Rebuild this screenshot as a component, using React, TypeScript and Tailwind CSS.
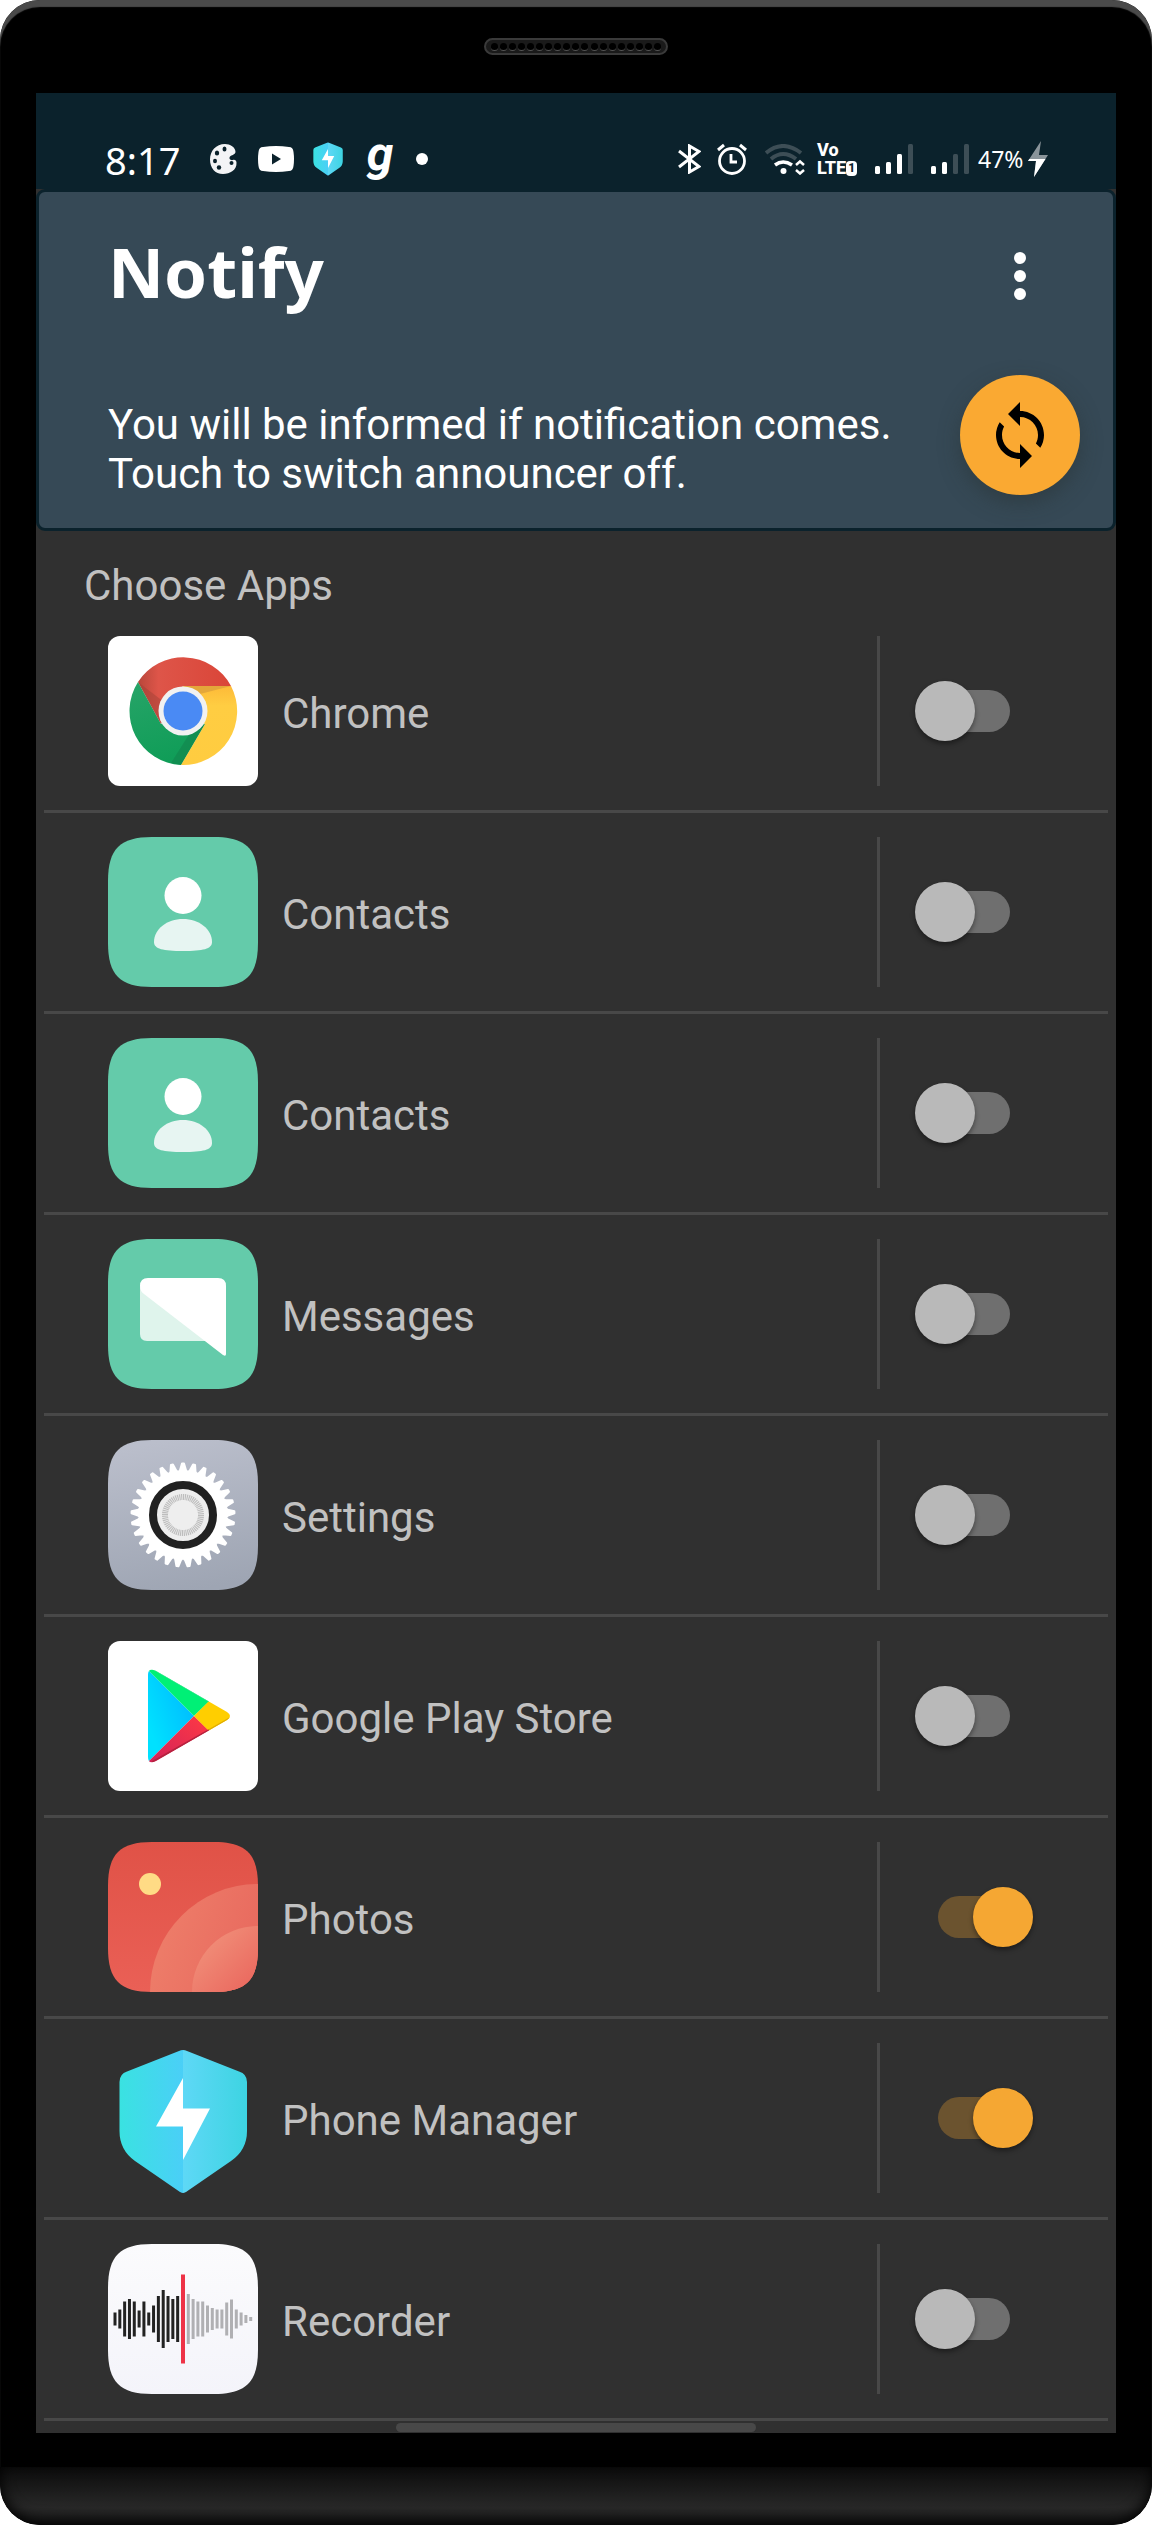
import { useState, type ReactNode } from "react";
import { MdSync } from "react-icons/md";

const SQUIRCLE =
  "M0 44C0 12 12 0 44 0H106C138 0 150 12 150 44V106C150 138 138 150 106 150H44C12 150 0 138 0 106Z";

const GEAR_TEETH = 29;
const gearPoints = Array.from({ length: GEAR_TEETH })
  .flatMap((_, i) => {
    const step = (2 * Math.PI) / GEAR_TEETH;
    const mid = i * step - Math.PI / 2;
    return [
      [43, -0.5],
      [45, -0.3],
      [51.5, -0.09],
      [51.5, 0.09],
      [45, 0.3],
    ].map(([r, o]) => {
      const a = mid + o * step;
      return `${(75 + r * Math.cos(a)).toFixed(2)},${(75 + r * Math.sin(a)).toFixed(2)}`;
    });
  })
  .join(" ");

const DARK_BARS = [13, 19, 35, 40, 35, 17, 35, 13, 27, 46, 58, 46, 40, 46];
const LIGHT_BARS = [50, 40, 35, 35, 27, 22, 19, 19, 33, 39, 19, 13, 8, 4];

function IconFrame({ children }: { children: ReactNode }) {
  return (
    <svg viewBox="0 0 150 150" className="size-[150px] shrink-0" aria-hidden="true">
      {children}
    </svg>
  );
}

function ChromeIcon() {
  return (
    <IconFrame>
      <defs>
        <linearGradient id="chRed" x1="0" x2="1">
          <stop offset="0" stopColor="#b8473b" />
          <stop offset="0.22" stopColor="#de5549" />
          <stop offset="1" stopColor="#da4538" />
        </linearGradient>
        <linearGradient id="chGreen" x1="0" y1="0" x2="0.3" y2="1">
          <stop offset="0" stopColor="#27a468" />
          <stop offset="1" stopColor="#109d58" />
        </linearGradient>
        <linearGradient id="chYellow" x1="0" y1="0" x2="0" y2="1">
          <stop offset="0" stopColor="#fdba38" />
          <stop offset="0.25" stopColor="#ffcd42" />
          <stop offset="1" stopColor="#ffcc40" />
        </linearGradient>
      </defs>
      <rect width="150" height="150" rx="12" fill="#fff" />
      <path d="M30 46A54 54 0 0 1 123 50H75L53 88Z" fill="url(#chRed)" />
      <path d="M30 46A54 54 0 0 0 73 129L97 88L75 75L53 88Z" fill="url(#chGreen)" />
      <path d="M123 50A54 54 0 0 1 73 129L97 88L75 75V50Z" fill="url(#chYellow)" />
      <path d="M75 50H123L92 58Z" fill="#d99c3a" opacity="0.7" />
      <path d="M97 88L73 129L63 127L82 97Z" fill="#12834c" opacity="0.6" />
      <path d="M30 46L53 88L56 66Z" fill="#9e4035" opacity="0.45" />
      <circle cx="75" cy="75" r="24.5" fill="#f1f1f1" />
      <circle cx="75" cy="75" r="19.5" fill="#4a8af4" />
    </IconFrame>
  );
}

function ContactsIcon() {
  return (
    <IconFrame>
      <path d={SQUIRCLE} fill="#64cbaa" />
      <circle cx="75" cy="58.5" r="18.5" fill="#fff" />
      <path
        d="M46 105C46 92 59 82 75 82S104 92 104 105C104 112 95 114 75 114S46 112 46 105Z"
        fill="#e7f5f2"
      />
    </IconFrame>
  );
}

function MessagesIcon() {
  return (
    <IconFrame>
      <path d={SQUIRCLE} fill="#64cbaa" />
      <path d="M32 48V95Q32 102 39 102H98L60 60Z" fill="#dff4ec" />
      <path
        d="M32 47Q32 39 40 39H110Q118 39 118 47V115Q118 118 115 116L36 55Q32 52 32 47Z"
        fill="#fff"
      />
    </IconFrame>
  );
}

function SettingsIcon() {
  return (
    <IconFrame>
      <defs>
        <linearGradient id="setBg" x1="0.4" y1="0" x2="0.6" y2="1">
          <stop offset="0" stopColor="#babecb" />
          <stop offset="1" stopColor="#9ea5b3" />
        </linearGradient>
      </defs>
      <path d={SQUIRCLE} fill="url(#setBg)" />
      <polygon points={gearPoints} fill="#fff" stroke="#fff" strokeWidth="2" strokeLinejoin="round" />
      <circle cx="75" cy="75" r="30" fill="#eee" stroke="#212121" strokeWidth="8" />
      <circle
        cx="75"
        cy="75"
        r="18"
        fill="none"
        stroke="#bdbdbd"
        strokeWidth="6"
        pathLength="120"
        strokeDasharray="1.2 0.8"
      />
    </IconFrame>
  );
}

function PlayStoreIcon() {
  return (
    <IconFrame>
      <defs>
        <clipPath id="playClip">
          <path d="M40 34Q40 26 48 30L119 71Q125 75 119 79L48 120Q40 124 40 116Z" />
        </clipPath>
        <linearGradient id="playBlue" x1="1" y1="0.2" x2="0.2" y2="0.8">
          <stop offset="0" stopColor="#00b8ff" />
          <stop offset="1" stopColor="#00e1ff" />
        </linearGradient>
        <linearGradient id="playRed" x1="1" y1="0" x2="0" y2="1">
          <stop offset="0" stopColor="#ff3a44" />
          <stop offset="1" stopColor="#d0205a" />
        </linearGradient>
      </defs>
      <rect width="150" height="150" rx="12" fill="#fff" />
      <g clipPath="url(#playClip)">
        <path d="M38 27L86 75L38 123Z" fill="url(#playBlue)" />
        <path d="M40 24V29L86 75L101 60.5V55Z" fill="#00f076" />
        <path d="M40 126V121L86 75L101 89.5V95Z" fill="url(#playRed)" />
        <path d="M86 75L101 60L106 50L130 75L106 100L101 90Z" fill="#ffce00" />
        <path d="M44 121L101 89" stroke="#b4233f" strokeWidth="2" />
        <path d="M101 89L122 77" stroke="#e0ac00" strokeWidth="2" />
        <path d="M44 27L101 60" stroke="#3fe08a" strokeWidth="2" />
      </g>
    </IconFrame>
  );
}

function PhotosIcon() {
  return (
    <IconFrame>
      <defs>
        <linearGradient id="phBg" x1="0" y1="0" x2="0" y2="1">
          <stop offset="0" stopColor="#e05247" />
          <stop offset="1" stopColor="#ea6056" />
        </linearGradient>
        <linearGradient id="phBig" gradientUnits="userSpaceOnUse" x1="60" y1="90" x2="150" y2="120">
          <stop offset="0" stopColor="#ed7b68" />
          <stop offset="1" stopColor="#e8695e" />
        </linearGradient>
        <linearGradient id="phSmall" gradientUnits="userSpaceOnUse" x1="100" y1="100" x2="145" y2="145">
          <stop offset="0" stopColor="#f08c77" />
          <stop offset="1" stopColor="#ea685e" />
        </linearGradient>
        <clipPath id="phClip">
          <path d={SQUIRCLE} />
        </clipPath>
      </defs>
      <g clipPath="url(#phClip)">
        <rect width="150" height="150" fill="url(#phBg)" />
        <circle cx="150" cy="150" r="108" fill="url(#phBig)" />
        <circle cx="150" cy="150" r="66" fill="url(#phSmall)" />
        <circle cx="42" cy="42" r="11" fill="#ffdb85" />
      </g>
    </IconFrame>
  );
}

function ShieldArt({ id }: { id: string }) {
  return (
    <>
      <defs>
        <linearGradient id={`${id}L`} x1="0" x2="1">
          <stop offset="0" stopColor="#3ae2e1" />
          <stop offset="1" stopColor="#4acff7" />
        </linearGradient>
        <linearGradient id={`${id}R`} x1="0" x2="1">
          <stop offset="0" stopColor="#5ed8f6" />
          <stop offset="1" stopColor="#3dd4e2" />
        </linearGradient>
      </defs>
      <path
        d="M75 7Q73 7 71 8L19 28.500Q11.500 31 11.500 39V88Q11.500 107 27 118L72 149Q74 150 75 150Z"
        fill={`url(#${id}L)`}
      />
      <path
        d="M75 7Q77 7 79 8L131 28.500Q139 31 139 39V88Q139 107 123 118L78 149Q76 150 75 150Z"
        fill={`url(#${id}R)`}
      />
      <path d="M75 35V65.500H102L75 117V83.500H48Z" fill="#fff" />
    </>
  );
}

function PhoneManagerIcon() {
  return (
    <IconFrame>
      <ShieldArt id="pm" />
    </IconFrame>
  );
}

function RecorderIcon() {
  return (
    <IconFrame>
      <defs>
        <linearGradient id="recBg" x1="0" y1="0" x2="0" y2="1">
          <stop offset="0" stopColor="#fbfbfd" />
          <stop offset="1" stopColor="#f4f4fa" />
        </linearGradient>
      </defs>
      <path d={SQUIRCLE} fill="url(#recBg)" />
      {DARK_BARS.map((h, i) => (
        <rect key={i} x={5.5 + i * 4.82} y={75 - h / 2} width="3" height={h} fill="#222" />
      ))}
      {LIGHT_BARS.map((h, i) => (
        <rect key={i} x={78.8 + i * 4.8} y={75 - h / 2} width="3" height={h} fill="#b0b0b3" />
      ))}
      <rect x="73" y="30.500" width="4" height="89" fill="#ee3347" />
    </IconFrame>
  );
}

function SignalIcon({ lit }: { lit: number }) {
  return (
    <svg viewBox="0 0 38 30" className="h-[30px] w-[38px]" aria-hidden="true">
      {[8, 12, 20, 30].map((h, i) => (
        <rect
          key={h}
          x={i * 11}
          y={30 - h}
          width="5"
          height={h}
          rx="1.500"
          fill={i < lit ? "#fff" : "#3d4e56"}
        />
      ))}
    </svg>
  );
}

function StatusBar() {
  return (
    <div className="flex h-24 items-center justify-between bg-[#0b222c] pt-9 pr-[68px] pl-[69px] text-white">
      <div className="flex items-center">
        <span className="w-[105px] pt-0.5 font-['Noto_Sans'] text-[38px] leading-[44px]">8:17</span>
        <svg viewBox="0 0 27 30" className="h-[30px] w-[27px]" aria-hidden="true">
          <path
            d="M15 0C6 0 0 7 0 15.500C0 24 5 30 13 30C20 30 27 26 26.500 18.500C26.300 16.500 25 15.500 23 16C20.500 16.800 18.500 14.500 20 12.500C21.500 11 25 11 25.500 8C25.500 3 20 0 15 0Z"
            fill="#f3f4f6"
          />
          <g fill="#0b222c">
            <ellipse cx="14.500" cy="5" rx="2" ry="2.500" />
            <ellipse cx="7" cy="9" rx="2.200" ry="2.500" />
            <ellipse cx="5" cy="17" rx="2" ry="2.300" />
            <ellipse cx="9" cy="23.500" rx="2.200" ry="2.300" />
            <circle cx="21.500" cy="19" r="2" />
          </g>
        </svg>
        <svg viewBox="0 0 36 26" className="ml-[21px] h-[26px] w-9" aria-hidden="true">
          <path
            d="M5 1Q18-1 31 1Q35 1 35.500 6Q36.500 13 35.500 20Q35 25 31 25Q18 27 5 25Q1 25 .5 20Q-.5 13 .5 6Q1 1 5 1Z"
            fill="#fff"
          />
          <path d="M14 7.500V18.500L23 13Z" fill="#0b222c" />
        </svg>
        <svg viewBox="10 5 130 147" className="ml-[19px] h-[34px] w-[30px]" aria-hidden="true">
          <ShieldArt id="st" />
        </svg>
        <span className="ml-[22px] w-[30px] pb-2.5 text-center font-['Roboto'] text-[48px] leading-[44px] font-bold italic">
          g
        </span>
        <span className="ml-[21px] size-3 rounded-full bg-white" />
      </div>

      <div className="flex items-center">
        <svg viewBox="0 0 23 30" className="h-[30px] w-[23px]" fill="none" stroke="#fff" strokeWidth="3" aria-hidden="true">
          <path d="M1 7L21 22.500L11.500 28V2L21 7.500L1 23" />
        </svg>
        <svg viewBox="0 0 30 32" className="ml-4 h-8 w-[30px]" fill="none" stroke="#fff" aria-hidden="true">
          <circle cx="15" cy="18" r="12.500" strokeWidth="2.800" />
          <path d="M1 7L7 2M23 2L29 7" strokeWidth="3" />
          <path d="M14 11V19H20" strokeWidth="2.800" />
        </svg>
        <svg viewBox="0 0 40 31" className="ml-[18px] h-[31px] w-10" fill="none" strokeWidth="4" aria-hidden="true">
          <path d="M1 9Q18-5 36 9" stroke="#3d4e56" />
          <path d="M6 15Q18 5 31 15" stroke="#3d4e56" />
          <path d="M10 21Q18 15 27 21" stroke="#fff" strokeWidth="3.500" />
          <circle cx="18.500" cy="27" r="3" fill="#fff" />
          <path d="M31 21L35 17.500L39 21M31 26L35 29.500L39 26" stroke="#fff" strokeWidth="2.500" />
        </svg>
        <span className="ml-3 flex w-[44px] flex-col font-['Roboto'] text-[18px] leading-[18px] font-extrabold">
          <span>Vo</span>
          <span className="flex items-center">
            LTE
            <span className="flex h-[15px] w-[11px] items-center justify-center rounded-sm bg-white text-[12px] leading-[15px] text-[#0b222c]">
              1
            </span>
          </span>
        </span>
        <span className="ml-[14px]">
          <SignalIcon lit={3} />
        </span>
        <span className="ml-[18px]">
          <SignalIcon lit={2} />
        </span>
        <span className="ml-[9px] w-[46px] font-['Noto_Sans'] text-[23px] leading-[32px]">47%</span>
        <svg viewBox="0 0 20 36" className="ml-1 h-9 w-5" aria-hidden="true">
          <path d="M13 0L0 20H8L6 36L20 14H11Z" fill="#8a949a" />
          <path d="M0 20L1.300 18H17.500L6 36L8 20Z" fill="#fff" />
        </svg>
      </div>
    </div>
  );
}

const APPS = [
  { id: "chrome", name: "Chrome", Icon: ChromeIcon, on: false },
  { id: "contacts-1", name: "Contacts", Icon: ContactsIcon, on: false },
  { id: "contacts-2", name: "Contacts", Icon: ContactsIcon, on: false },
  { id: "messages", name: "Messages", Icon: MessagesIcon, on: false },
  { id: "settings", name: "Settings", Icon: SettingsIcon, on: false },
  { id: "play", name: "Google Play Store", Icon: PlayStoreIcon, on: false },
  { id: "photos", name: "Photos", Icon: PhotosIcon, on: true },
  { id: "manager", name: "Phone Manager", Icon: PhoneManagerIcon, on: true },
  { id: "recorder", name: "Recorder", Icon: RecorderIcon, on: false },
];

function AppRow({ app }: { app: (typeof APPS)[number] }) {
  const [on, setOn] = useState(app.on);
  const { Icon } = app;
  return (
    <li className="flex items-center border-b-[3px] border-[#484848] py-6 pr-[74px] pl-16">
      <Icon />
      <label htmlFor={app.id} className="ml-6 flex-1 pt-1 text-[42px] leading-[49px] text-[#c1c1c1]">
        {app.name}
      </label>
      <span className="mr-[34px] w-[3px] self-stretch bg-[#484848]" />
      <input
        id={app.id}
        type="checkbox"
        role="switch"
        checked={on}
        onChange={(e) => setOn(e.target.checked)}
        className="relative h-[60px] w-[120px] shrink-0 cursor-pointer appearance-none before:absolute before:inset-x-6 before:inset-y-[9px] before:rounded-full before:bg-[#6f6f6f] after:absolute after:top-0 after:left-px after:size-[60px] after:rounded-full after:bg-[#b9b9b9] after:shadow-[0_3px_5px_rgba(0,0,0,0.4)] checked:before:bg-[#6b532f] checked:after:right-px checked:after:left-auto checked:after:bg-[#f5a733]"
      />
    </li>
  );
}

export default function App() {
  return (
    <div className="bg-white">
      <div className="overflow-hidden rounded-[40px] bg-black font-['Roboto',sans-serif] shadow-[inset_0_7px_1px_#4a4a4a]">
        <div className="flex h-[93px] justify-center pt-[38px]">
          <div className="flex h-[17px] w-[184px] items-center justify-around rounded-full border-2 border-[#3a3a3a] bg-[#1a1a1a] px-1">
            {Array.from({ length: 19 }, (_, i) => (
              <span key={i} className="h-2 w-[7px] rounded-full border-b border-[#555] bg-black" />
            ))}
          </div>
        </div>

        <main className="mx-9 bg-[#303030]">
          <StatusBar />

          <header className="rounded-[9px] border-[3px] border-[#0b222c] bg-[#364956] pt-[39px] pr-[33px] pb-[30px] pl-[69px] text-white">
            <div className="flex items-end justify-between">
              <h1 className="font-['Noto_Sans'] text-[69px] leading-[80px] font-bold">Notify</h1>
              <button type="button" aria-label="More options" className="flex h-[70px] w-[120px] flex-col items-center justify-center gap-1.5">
                <span className="size-3 rounded-full bg-white" />
                <span className="size-3 rounded-full bg-white" />
                <span className="size-3 rounded-full bg-white" />
              </button>
            </div>
            <div className="mt-16 flex items-start justify-between">
              <p className="pt-[25px] text-[42px] leading-[49px]">
                You will be informed if notification comes.
                <br />
                Touch to switch announcer off.
              </p>
              <button
                type="button"
                aria-label="Switch announcer"
                className="flex size-[120px] shrink-0 items-center justify-center rounded-full bg-[#faa932] text-black shadow-[0_8px_20px_rgba(40,50,50,0.5)]"
              >
                <MdSync className="size-[72px]" />
              </button>
            </div>
          </header>

          <h2 className="pt-[30px] pb-[2px] pl-12 text-[42px] leading-[49px] text-[#c1c1c1]">Choose Apps</h2>
          <ul className="px-2">
            {APPS.map((app) => (
              <AppRow key={app.id} app={app} />
            ))}
          </ul>
          <div className="flex h-3 items-center justify-center">
            <span className="h-[9px] w-[360px] rounded-[5px] bg-[#484848]" />
          </div>
        </main>

        <div className="mt-[34px] h-[58px] rounded-b-[40px] bg-linear-to-b from-[#0c0c0c] via-[#282828] via-70% to-[#1c1c1c] shadow-[inset_0_-4px_14px_#000]" />
      </div>
    </div>
  );
}
